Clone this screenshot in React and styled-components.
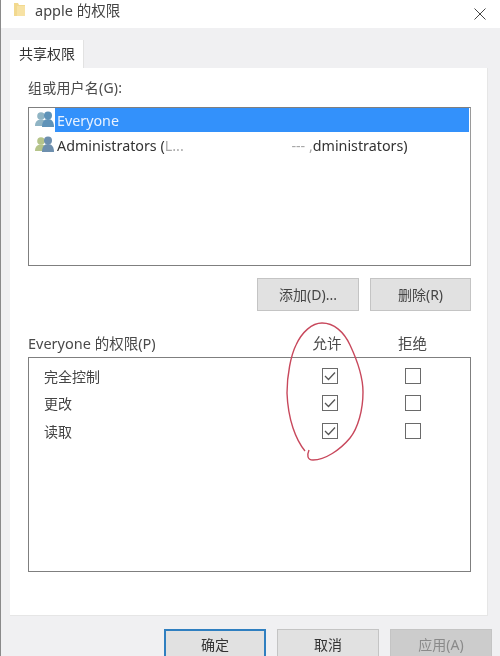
import React from "react";
import styled, { createGlobalStyle } from "styled-components";

const GlobalStyle = createGlobalStyle`
  html, body {
    margin: 0;
    padding: 0;
    background: #ffffff;
  }
`;

const Window = styled.div`
  position: relative;
  width: 500px;
  height: 656px;
  box-sizing: border-box;
  overflow: hidden;
  display: flex;
  flex-direction: column;
  background: #ffffff;
  border-left: 1px solid #8a8a8a;
  font-family: "Noto Sans", "Noto Sans CJK SC", sans-serif;
  font-size: 14px;
  color: #3a3a3a;
  filter: blur(0.4px);
`;

const TitleBar = styled.div`
  flex: 0 0 28px;
  box-sizing: border-box;
  display: flex;
  align-items: flex-start;
  padding: 2px 14px 0 13px;
  gap: 10px;
`;

const TitleText = styled.div`
  flex: 1;
  font-size: 14.5px;
  line-height: 17px;
  color: #444444;
`;

const CloseButton = styled.div`
  margin-top: 3px;
  width: 12px;
  height: 12px;
`;

const Body = styled.div`
  flex: 1;
  display: flex;
  flex-direction: column;
  background: #f0f0f2;
  padding: 12px 12px 0 9px;
`;

const Tab = styled.div`
  align-self: flex-start;
  width: 74px;
  height: 28px;
  box-sizing: border-box;
  padding-left: 9px;
  background: #ffffff;
  font-size: 14px;
  line-height: 27px;
  color: #333333;
  border-right: 1px solid #e2e2e2;
`;

const Panel = styled.div`
  flex: 0 0 548px;
  box-sizing: border-box;
  background: #ffffff;
  padding: 10px 16px 0 18px;
  display: flex;
  flex-direction: column;
  border-right: 1px solid #e6e6e6;
  border-bottom: 1px solid #e6e6e6;
`;

const GroupLabel = styled.div`
  font-size: 14px;
  line-height: 20px;
  color: #4a4a4a;
  letter-spacing: 0.2px;
`;

const ListBox = styled.div`
  margin-top: 9px;
  height: 159px;
  box-sizing: border-box;
  border: 1px solid #7f7f7f;
  border-right-color: #9a9a9a;
  padding: 0 1px;
`;

const UserRow = styled.div`
  height: 24px;
  display: flex;
  align-items: center;
  gap: 1px;
  padding-left: 5px;
  margin-bottom: 1px;
`;

const UserName = styled.div`
  flex: 1;
  height: 24px;
  display: flex;
  align-items: center;
  padding-left: 2px;
  font-size: 14.3px;
  white-space: nowrap;
  color: ${(p) => (p.$selected ? "#e8f2ff" : "#333333")};
  background: ${(p) => (p.$selected ? "#3391fb" : "transparent")};
`;

const Smudge = styled.span`
  display: inline-block;
  width: ${(p) => p.$width}px;
  overflow: hidden;
  color: #a8a8a8;
  text-align: ${(p) => p.$align || "left"};
`;

const ListActions = styled.div`
  margin-top: 12px;
  display: flex;
  justify-content: flex-end;
  gap: 11px;
`;

const ActionButton = styled.div`
  width: ${(p) => p.$width || 101}px;
  height: 33px;
  box-sizing: border-box;
  padding-bottom: 2px;
  display: flex;
  align-items: center;
  justify-content: center;
  background: #e1e1e1;
  border: 1px solid #c4c4c4;
  font-size: 14px;
  color: #454545;
`;

const PermHeader = styled.div`
  margin-top: 21px;
  display: grid;
  grid-template-columns: 1fr 83px 83px 17px;
  align-items: center;
  height: 20px;
  font-size: 14.5px;
  color: #4a4a4a;
`;

const HeaderCell = styled.div`
  text-align: center;
  padding-right: ${(p) => p.$inset || 0}px;
`;

const PermBox = styled.div`
  margin-top: 5px;
  height: 215px;
  box-sizing: border-box;
  border: 1px solid #7f7f7f;
  padding-top: 4px;
`;

const PermRow = styled.div`
  height: 27.5px;
  display: grid;
  grid-template-columns: 1fr 83px 83px 16px;
  align-items: center;
  padding-left: 15px;
  font-size: 14px;
  color: #444444;
`;

const CheckCell = styled.div`
  display: flex;
  justify-content: center;
`;

const CheckBox = styled.div`
  width: 16px;
  height: 16px;
  box-sizing: border-box;
  border: 1px solid #6a6a6a;
  display: flex;
  align-items: center;
  justify-content: center;
`;

const Footer = styled.div`
  display: flex;
  padding: 13px 0 0 154px;
  gap: 11px;
`;

const FooterButton = styled.div`
  width: 102px;
  height: 33px;
  box-sizing: border-box;
  padding-bottom: 3px;
  flex: none;
  display: flex;
  align-items: center;
  justify-content: center;
  font-size: 14px;
  background: ${(p) => (p.$disabled ? "#cccccc" : "#e1e1e1")};
  color: ${(p) => (p.$disabled ? "#8a8a8a" : "#333333")};
  border: ${(p) => (p.$primary ? "2px solid #2f7fc0" : "1px solid #c4c4c4")};
`;

const Annotation = styled.svg`
  position: absolute;
  left: -1px;
  top: 0;
  pointer-events: none;
`;

const FolderIcon = () => (
  <svg width="11" height="15" viewBox="0 0 11 15">
    <path d="M0 1h4l1 2h6v11H0z" fill="#f2d98f" />
    <rect x="3" y="4" width="8" height="10" fill="#f7e2a4" />
  </svg>
);

const CloseIcon = () => (
  <svg width="12" height="12" viewBox="0 0 12 12">
    <path d="M0.5 0.5l11 11M11.5 0.5l-11 11" stroke="#444444" strokeWidth="1" fill="none" />
  </svg>
);

const UsersIcon = ({ left, right }) => (
  <svg width="19" height="18" viewBox="0 0 19 18">
    <circle cx="6" cy="5" r="3.8" fill={left} />
    <path d="M0 15c0-4 2-6.500 6-6.500s6 2.500 6 6.500z" fill={left} />
    <circle cx="13" cy="4.500" r="4" fill={right} />
    <path d="M7 16c0-5 2-8 6-8s6 3 6 8z" fill={right} />
  </svg>
);

const Tick = () => (
  <svg width="12" height="10" viewBox="0 0 12 10">
    <path d="M1 5l3.500 3.500L11 1.500" stroke="#555555" strokeWidth="1.300" fill="none" />
  </svg>
);

const permissions = ["完全控制", "更改", "读取"];

export default function App() {
  return (
    <>
      <GlobalStyle />
      <Window>
        <TitleBar>
          <FolderIcon />
          <TitleText>apple 的权限</TitleText>
          <CloseButton>
            <CloseIcon />
          </CloseButton>
        </TitleBar>
        <Body>
          <Tab>共享权限</Tab>
          <Panel>
            <GroupLabel>组或用户名(G):</GroupLabel>
            <ListBox>
              <UserRow>
                <UsersIcon left="#8fb4c4" right="#5f93b8" />
                <UserName $selected>Everyone</UserName>
              </UserRow>
              <UserRow>
                <UsersIcon left="#b5c48a" right="#6d8fae" />
                <UserName>
                  Administrators (<Smudge $width={60}>L...</Smudge>
                  <Smudge $width={88} $align="right">--- ,</Smudge>dministrators)
                </UserName>
              </UserRow>
            </ListBox>
            <ListActions>
              <ActionButton $width={102}>添加(D)...</ActionButton>
              <ActionButton>删除(R)</ActionButton>
            </ListActions>
            <PermHeader>
              <div>Everyone 的权限(P)</div>
              <HeaderCell $inset={5}>允许</HeaderCell>
              <HeaderCell>拒绝</HeaderCell>
            </PermHeader>
            <PermBox>
              {permissions.map((name) => (
                <PermRow key={name}>
                  <div>{name}</div>
                  <CheckCell>
                    <CheckBox>
                      <Tick />
                    </CheckBox>
                  </CheckCell>
                  <CheckCell>
                    <CheckBox />
                  </CheckCell>
                </PermRow>
              ))}
            </PermBox>
          </Panel>
          <Footer>
            <FooterButton $primary>确定</FooterButton>
            <FooterButton>取消</FooterButton>
            <FooterButton $disabled>应用(A)</FooterButton>
          </Footer>
        </Body>
        <Annotation width="500" height="656" viewBox="0 0 500 656">
          <path
            d="M305 451C296 440 288 420 287 393C287 375 291 355 296 345C302 332 312 323 322 323C334 323 344 332 350 345C358 362 363 378 363 392C363 410 358 428 350 438C340 450 325 460 313 460C307 460 307 455 309 450"
            stroke="#c8485c"
            strokeWidth="1.400"
            fill="none"
          />
        </Annotation>
      </Window>
    </>
  );
}
